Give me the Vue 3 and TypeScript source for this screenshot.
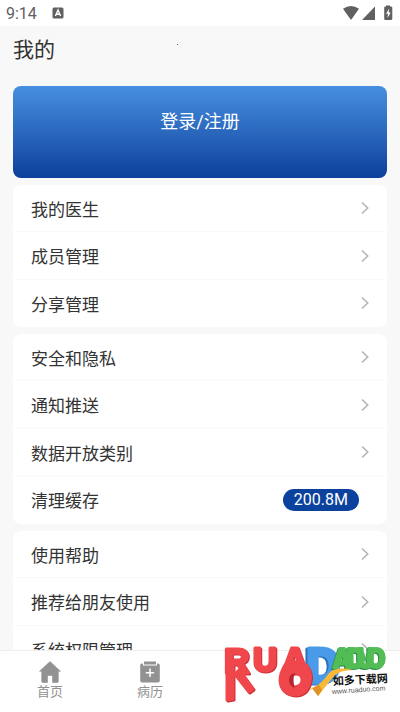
<script setup lang="ts">
interface Item {
  label: string
  badge?: string
}

const groups: Item[][] = [
  [{ label: '我的医生' }, { label: '成员管理' }, { label: '分享管理' }],
  [
    { label: '安全和隐私' },
    { label: '通知推送' },
    { label: '数据开放类别' },
    { label: '清理缓存', badge: '200.8M' },
  ],
  [{ label: '使用帮助' }, { label: '推荐给朋友使用' }, { label: '系统权限管理' }],
]
</script>

<template>
  <div class="screen">
    <div class="status">
      <span class="time">9:14</span>
      <svg class="input-mode" viewBox="0 0 12 12" width="12" height="12" aria-hidden="true">
        <rect x="0.5" y="0.5" width="11" height="11" rx="1.5" fill="#606060" />
        <path d="M3.4 9 L6 3 L8.6 9 M4.5 7.2 H7.5" fill="none" stroke="#fff" stroke-width="1.4" />
      </svg>
      <svg class="signals" viewBox="0 0 52 16" width="52" height="16" aria-hidden="true">
        <g fill="#606060">
          <path d="M1 3.8 Q9 -2 17 3.8 L9 15 Z" />
          <path d="M33 1.5 V15 H20 Z" />
          <path d="M44 1.5 V0.5 H48 V1.5 H49 Q50.3 1.5 50.3 2.8 V13.7 Q50.3 15 49 15 H43.5 Q42.2 15 42.2 13.7 V2.8 Q42.2 1.5 43.5 1.5 Z" />
        </g>
        <path d="M47.2 3.5 L44 8.8 H46 L45.5 13 L48.7 7.5 H46.7 Z" fill="#fff" />
      </svg>
    </div>

    <main class="content">
      <header class="header">
        <h1>我的</h1>
        <i class="speck"></i>
      </header>

      <button class="login" type="button">登录/注册</button>

      <ul v-for="(group, g) in groups" :key="g" class="card">
        <li v-for="item in group" :key="item.label">
          <button class="row" type="button">
            <span>{{ item.label }}</span>
            <span v-if="item.badge" class="badge">{{ item.badge }}</span>
            <svg v-else viewBox="0 0 8 14" width="8" height="14" aria-hidden="true">
              <path d="M1 1.5 L6.7 7 L1 12.5" fill="none" stroke="#b5b5b5" stroke-width="1.6" />
            </svg>
          </button>
        </li>
      </ul>
    </main>

    <nav class="tabs">
      <a href="#home">
        <svg viewBox="0 0 22 22" width="22" height="22" aria-hidden="true">
          <path d="M11 0.5 L21.5 10.3 H19.3 V20.5 Q19.3 21.5 18.3 21.5 H13.5 V14.5 H8.5 V21.5 H3.7 Q2.7 21.5 2.7 20.5 V10.3 H0.5 Z" fill="#929292" stroke="#929292" stroke-width="0.6" stroke-linejoin="round" />
        </svg>
        <span>首页</span>
      </a>
      <a href="#records">
        <svg viewBox="0 0 22 22" width="22" height="22" aria-hidden="true">
          <path d="M5 0.6 H17 V3.4 H5 Z M3 2.4 H4 V4.4 H18 V2.4 H19 Q20.8 2.4 20.8 4.2 V19.7 Q20.8 21.5 19 21.5 H3 Q1.2 21.5 1.2 19.7 V4.2 Q1.2 2.4 3 2.4 Z" fill="#929292" />
          <path d="M11 7.5 V16 M6.8 11.8 H15.2" stroke="#fff" stroke-width="1.5" />
        </svg>
        <span>病历</span>
      </a>
    </nav>

    <svg class="brand" viewBox="0 0 185 82" width="185" height="82" role="img" aria-label="RUADADUO 如多下载网">
      <g class="letters blue">
        <text x="90" y="53" font-size="48">D</text>
      </g>
      <g class="letters green">
        <text x="118" y="38" font-size="26">A</text>
        <text x="131" y="38" font-size="26">D</text>
        <text x="141" y="38" font-size="26">U</text>
        <text x="151" y="38" font-size="26">O</text>
      </g>
      <path d="M76 67 Q101 62 114 43 Q121 36 138 40 Q125 40 119 46 L103 66 L97 58 Q89 67 76 67 Z" fill="#f8b938" />
      <path d="M97 58 L103 66 L107 60 L104 55 Z" fill="#df9225" />
      <g class="letters red">
        <text x="9" y="43" font-size="35">R</text>
        <path d="M12 34 H18 V69 L12 70 Z M24 40 L38 59 L34 62 L20 44 Z" />
        <text x="38" y="41" font-size="33">U</text>
        <text x="67" y="42" font-size="35">A</text>
        <path fill-rule="evenodd" d="M70 35 L75 32 H86 L91 35 Q97 43 95 51 Q92 65 80 65 Q66 64 65 51 Q65 43 70 35 Z M80 43 Q74 43 74 50 Q74 57 80 57 Q87 56 87 50 Q87 43 80 43 Z" />
      </g>
      <path d="M80 43 Q74 44 74 50 Q74 56 80 58 Q77 50 80 43 Z" fill="#b62630" />
      <text class="brand-name" x="118" y="55" font-size="11" transform="rotate(-3 118 55)">如多下载网</text>
      <text class="brand-url" x="117" y="64" font-size="7" transform="rotate(-4 117 64)">www.ruaduo.com</text>
    </svg>
  </div>
</template>

<style>
body {
  margin: 0;
  background: #f8f8f8;
}
</style>

<style scoped>
.screen {
  position: relative;
  display: flex;
  flex-direction: column;
  height: 100vh;
  overflow: hidden;
  background: #f8f8f8;
  color: #333;
  font-family: Roboto, "Noto Sans CJK SC", sans-serif;
}

button {
  border: 0;
  font: inherit;
  color: inherit;
}

.status {
  display: flex;
  flex: none;
  align-items: center;
  height: 26px;
  padding: 0 6px;
  background: #fff;
  color: #606060;
}

.time {
  padding-top: 2px;
  font-size: 16px;
  line-height: 24px;
}

.input-mode {
  margin-left: 15px;
}

.signals {
  margin-left: auto;
}

.content {
  flex: 1;
  min-height: 0;
  padding: 0 13px;
  overflow: hidden;
}

.header {
  position: relative;
  height: 60px;
}

h1 {
  margin: 0;
  font-size: 21px;
  font-weight: 400;
  line-height: 48px;
}

.speck {
  position: absolute;
  top: 18px;
  left: 164px;
  width: 1px;
  height: 1px;
  background: #555;
}

.login {
  display: block;
  width: 100%;
  height: 92px;
  padding: 0 0 24px;
  border-radius: 8px;
  background: linear-gradient(#478fe0, #0d409b);
  color: #fff;
  font-size: 18px;
}

.card {
  display: grid;
  grid-auto-rows: 47px 48px;
  margin: 7px 0 0;
  padding: 0;
  overflow: hidden;
  border-radius: 8px;
  background: #fff;
  list-style: none;
}

.card li {
  border-bottom: 1px solid #fafafa;
}

.card li:last-child {
  border-bottom-color: transparent;
}

.row {
  display: flex;
  align-items: center;
  justify-content: space-between;
  width: 100%;
  height: 100%;
  padding: 0 18px;
  background: none;
  font-size: 17px;
  text-align: left;
}

.badge {
  margin-right: 10px;
  padding: 0 11px;
  border-radius: 11px;
  background: #0b429d;
  color: #fff;
  font-size: 16px;
  line-height: 22px;
}

.tabs {
  display: grid;
  flex: none;
  grid-template-columns: repeat(4, 1fr);
  height: 62px;
  box-sizing: border-box;
  border-top: 1px solid #eee;
  background: #fff;
}

.tabs a {
  display: flex;
  flex-direction: column;
  align-items: center;
  padding-top: 10px;
  color: #929292;
  font-size: 13px;
  line-height: 18px;
  text-decoration: none;
}

.brand {
  position: absolute;
  right: 0;
  bottom: 0;
}

.letters {
  font-family: "Liberation Sans Narrow", "DejaVu Sans Condensed", "Liberation Sans", sans-serif;
  font-weight: 700;
  stroke-linejoin: round;
}

.red {
  fill: #f0474c;
  stroke: #f0474c;
  stroke-width: 3px;
  font-family: "Liberation Sans", sans-serif;
  filter: drop-shadow(1px 1px 0 #cb3039);
}

.blue {
  fill: #499bea;
  stroke: #499bea;
  stroke-width: 3px;
  filter: drop-shadow(-2px 1px 0 #2a72ba);
}

.green {
  fill: #53bd55;
  stroke: #53bd55;
  stroke-width: 2px;
  filter: drop-shadow(-1px 1px 0 #218a43);
}

.brand-name {
  fill: #111;
  font-family: "Noto Sans CJK SC", sans-serif;
  font-weight: 700;
}

.brand-url {
  fill: #555;
  font-family: "Liberation Sans", sans-serif;
}
</style>
